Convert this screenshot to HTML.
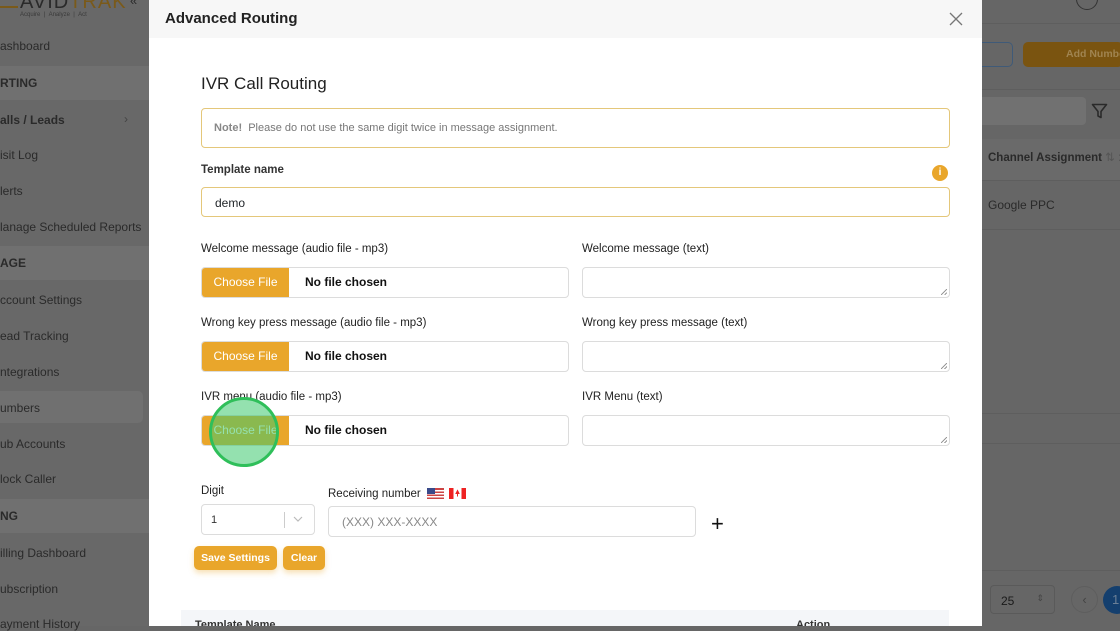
<!DOCTYPE html>
<html><head><meta charset="utf-8">
<style>
*{box-sizing:border-box;margin:0;padding:0}
body{width:1120px;height:626px;overflow:hidden;position:relative;background:#666;font-family:"Liberation Sans",sans-serif;color:#212529}
.a{position:absolute}
.side{left:0;top:0;width:149px;height:626px;background:#686868}
.si{position:absolute;left:0;font-size:12px;color:#2a2a2a;white-space:nowrap}
.sh{position:absolute;left:0;width:149px;height:34px;background:#707070;font-weight:bold;font-size:12px;color:#2a2a2a;padding:10px 0 0 0}
.modal{left:149px;top:0;width:833px;height:626px;background:#fff;overflow:hidden}
.hdr{left:0;top:0;width:833px;height:38px;background:#f7f7f7}
.lbl{position:absolute;font-size:11.5px;color:#222;white-space:nowrap}
.inp{position:absolute;border:1px solid #dcdcdc;border-radius:4px;background:#fff}
.ta::after{content:"";position:absolute;right:2px;bottom:2px;width:6px;height:6px;background:linear-gradient(135deg,transparent 45%,#999 45%,#999 55%,transparent 55%,transparent 75%,#999 75%,#999 85%,transparent 85%)}
.file{position:absolute;height:31px;border:1px solid #dcdcdc;border-radius:4px;background:#fff;width:368px}
.file .b{position:absolute;left:0;top:0;width:87px;height:29px;background:#e9a62b;color:#fff;font-size:12px;text-align:center;line-height:29px;border-radius:3px 0 0 3px}
.file .t{position:absolute;left:103px;top:0;line-height:29px;font-size:12px;font-weight:bold;color:#111}
.btn{position:absolute;background:#e9a62b;color:#fff;font-weight:bold;font-size:10.5px;border-radius:5px;text-align:center;line-height:24px;box-shadow:0 3px 6px rgba(233,166,43,.35)}
</style></head><body>
<div class="a side">
 <div class="a" style="left:20px;top:-9px;font-size:20px;color:#2a2a2a;letter-spacing:1px">AVID<span style="color:#7a5a1a">TRAK</span></div>
 <div class="a" style="left:20px;top:12px;font-size:6px;color:#3a3a3a;white-space:nowrap">Acquire &nbsp;| &nbsp;Analyze &nbsp;| &nbsp;Act</div>
 <div class="a" style="left:0;top:6px;width:18px;height:2px;background:#7a5a1a"></div>
 <div class="a" style="left:130px;top:-7px;font-size:13px;color:#2a2a2a">«</div>
 <div class="si" style="top:39px">ashboard</div>
 <div class="sh" style="top:66px">RTING</div>
 <div class="si" style="top:113px;font-weight:bold">alls / Leads</div>
 <div class="si" style="left:124px;top:112px;color:#444">›</div>
 <div class="si" style="top:148px">isit Log</div>
 <div class="si" style="top:184px">lerts</div>
 <div class="si" style="top:220px">lanage Scheduled Reports</div>
 <div class="sh" style="top:246px">AGE</div>
 <div class="si" style="top:293px">ccount Settings</div>
 <div class="si" style="top:329px">ead Tracking</div>
 <div class="si" style="top:365px">ntegrations</div>
 <div class="a" style="left:0;top:391px;width:143px;height:32px;background:#707070;border-radius:0 5px 5px 0"></div>
 <div class="si" style="top:401px">umbers</div>
 <div class="si" style="top:437px">ub Accounts</div>
 <div class="si" style="top:472px">lock Caller</div>
 <div class="sh" style="top:499px">NG</div>
 <div class="si" style="top:546px">illing Dashboard</div>
 <div class="si" style="top:582px">ubscription</div>
 <div class="si" style="top:617px">ayment History</div>
</div>
<div class="a" style="left:982px;top:23px;width:138px;height:1px;background:#5e5e5e"></div>
<div class="a" style="left:1076px;top:-12px;width:22px;height:22px;border:1.5px solid #333;border-radius:50%"></div>
<div class="a" style="left:982px;top:42px;width:31px;height:25px;border:1.5px solid #3f5a78;border-left:none;border-radius:0 5px 5px 0"></div>
<div class="a" style="left:1023px;top:42px;width:100px;height:25px;background:#7a5410;border-radius:5px;color:#a08450;font-weight:bold;font-size:10.5px;line-height:25px;padding-left:43px;white-space:nowrap">Add Numbe</div>
<div class="a" style="left:982px;top:89px;width:138px;height:1px;background:#5e5e5e"></div>
<div class="a" style="left:982px;top:97px;width:104px;height:28px;background:#717171;border-radius:0 4px 4px 0"></div>
<svg class="a" style="left:1091px;top:103px" width="17" height="17" viewBox="0 0 17 17"><path d="M1.5 1.5h14l-5.5 7v6l-3-1.5v-4.5z" fill="none" stroke="#2a2a2a" stroke-width="1.6" stroke-linejoin="round"/></svg>
<div class="a" style="left:982px;top:139px;width:138px;height:42px;background:#6a6a6a;border-bottom:1px solid #5e5e5e"></div>
<div class="a" style="left:988px;top:150px;font-size:11.5px;font-weight:bold;color:#2a2a2a;white-space:nowrap">Channel Assignment <span style="color:#555;font-weight:normal">⇅ :</span></div>
<div class="a" style="left:988px;top:198px;font-size:12px;color:#2a2a2a">Google PPC</div>
<div class="a" style="left:982px;top:229px;width:138px;height:1px;background:#5e5e5e"></div>
<div class="a" style="left:982px;top:413px;width:138px;height:1px;background:#5e5e5e"></div>
<div class="a" style="left:982px;top:443px;width:138px;height:1px;background:#5e5e5e"></div>
<div class="a" style="left:982px;top:570px;width:138px;height:1px;background:#5e5e5e"></div>
<div class="a" style="left:990px;top:585px;width:65px;height:29px;border:1px solid #5a5a5a;border-radius:4px;font-size:12px;color:#1a1a1a;padding:8px 0 0 10px">25<span style="position:absolute;right:10px;top:7px;font-size:9px;color:#444">⇕</span></div>
<div class="a" style="left:1071px;top:586px;width:27px;height:27px;border:1px solid #5e5e5e;border-radius:50%;color:#444;font-size:13px;text-align:center;line-height:25px">‹</div>
<div class="a" style="left:1103px;top:586px;width:28px;height:28px;background:#143f6e;border-radius:50%;color:#6a7f96;font-size:13px;line-height:28px;padding-left:9px">1</div>

<div class="a modal">
 <div class="a hdr"></div>
 <div class="a" style="left:16px;top:10px;font-size:15px;font-weight:bold;color:#222">Advanced Routing</div>
 <svg class="a" style="left:800px;top:12px" width="14" height="14" viewBox="0 0 14 14"><path d="M1 1L13 13M13 1L1 13" stroke="#777" stroke-width="1.3"/></svg>
 <div class="a" style="left:52px;top:74px;font-size:17px;color:#222">IVR Call Routing</div>
 <div class="inp" style="left:52px;top:108px;width:749px;height:40px;border-color:#e4c77a;font-size:11px;color:#777;padding:13px 0 0 12px"><b style="color:#888">Note!</b>&nbsp; Please do not use the same digit twice in message assignment.</div>
 <div class="lbl" style="left:52px;top:164px;font-weight:bold;color:#333">Template name</div>
 <div class="a" style="left:783px;top:165px;width:16px;height:16px;border-radius:50%;background:#e9a62b;color:#fff;font-size:10px;font-weight:bold;text-align:center;line-height:16px">i</div>
 <div class="inp" style="left:52px;top:187px;width:749px;height:30px;border-color:#e4c77a;font-size:12px;padding:8px 0 0 13px">demo</div>

 <div class="lbl" style="left:52px;top:243px">Welcome message (audio file - mp3)</div>
 <div class="lbl" style="left:433px;top:243px">Welcome message (text)</div>
 <div class="file" style="left:52px;top:267px"><div class="b">Choose File</div><div class="t">No file chosen</div></div>
 <div class="inp ta" style="left:433px;top:267px;width:368px;height:31px"></div>

 <div class="lbl" style="left:52px;top:317px">Wrong key press message (audio file - mp3)</div>
 <div class="lbl" style="left:433px;top:317px">Wrong key press message (text)</div>
 <div class="file" style="left:52px;top:341px"><div class="b">Choose File</div><div class="t">No file chosen</div></div>
 <div class="inp ta" style="left:433px;top:341px;width:368px;height:31px"></div>

 <div class="lbl" style="left:52px;top:391px">IVR menu (audio file - mp3)</div>
 <div class="lbl" style="left:433px;top:391px">IVR Menu (text)</div>
 <div class="file" style="left:52px;top:415px"><div class="b">Choose File</div><div class="t">No file chosen</div></div>
 <div class="inp ta" style="left:433px;top:415px;width:368px;height:31px"></div>
 <div class="a" style="left:60px;top:397px;width:70px;height:70px;border-radius:50%;background:rgba(60,200,110,.55);border:3px solid #2fbf5a"></div>

 <div class="lbl" style="left:52px;top:485px">Digit</div>
 <div class="inp" style="left:52px;top:504px;width:114px;height:31px;font-size:11px;padding:9px 0 0 9px;color:#333">1<span style="position:absolute;left:82px;top:7px;width:1px;height:16px;background:#ccc"></span><svg style="position:absolute;left:91px;top:11px" width="10" height="6"><path d="M1 1l4 4 4-4" fill="none" stroke="#bbb" stroke-width="1.2"/></svg></div>
 <div class="lbl" style="left:179px;top:488px">Receiving number</div>
 <svg class="a" style="left:278px;top:488px" width="17" height="11"><rect width="17" height="11" fill="#c44"/><rect y="2" width="17" height="1.5" fill="#fff"/><rect y="5" width="17" height="1.5" fill="#fff"/><rect y="8" width="17" height="1.5" fill="#fff"/><rect width="8" height="6" fill="#3a4a8a"/></svg>
 <svg class="a" style="left:300px;top:488px" width="17" height="11"><rect width="17" height="11" fill="#e22"/><rect x="4.5" width="8" height="11" fill="#fff"/><path d="M8.5 2.5l1.5 3h-3z M8.5 5v3.5" stroke="#e22" fill="#e22"/></svg>
 <div class="inp" style="left:179px;top:506px;width:368px;height:31px;font-size:12px;color:#888;padding:8px 0 0 13px">(XXX) XXX-XXXX</div>
 <div class="a" style="left:562px;top:512px;font-size:22px;color:#111;line-height:24px">+</div>
 <div class="btn" style="left:45px;top:546px;width:83px">Save Settings</div>
 <div class="btn" style="left:134px;top:546px;width:42px">Clear</div>
 <div class="a" style="left:32px;top:610px;width:768px;height:16px;background:#f4f6f9"></div>
 <div class="a" style="left:46px;top:619px;font-size:11px;font-weight:bold;color:#333">Template Name</div>
 <div class="a" style="left:647px;top:619px;font-size:11px;font-weight:bold;color:#333">Action</div>
</div>
</body></html>
